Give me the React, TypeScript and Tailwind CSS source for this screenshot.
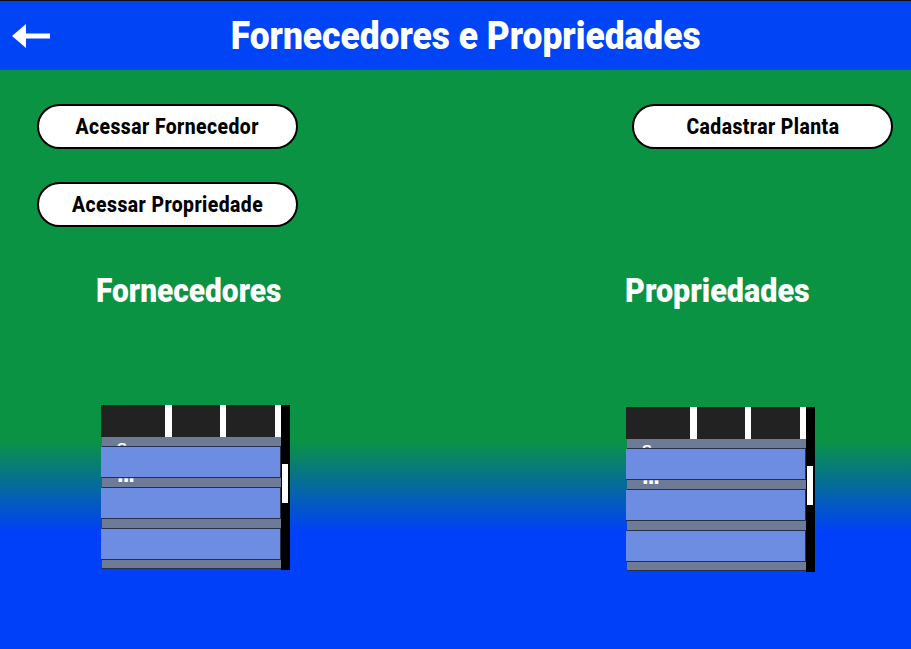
const titleFont = "font-['Roboto','Liberation_Sans',sans-serif] font-black whitespace-nowrap";
const buttonFont = "font-['Roboto','Liberation_Sans',sans-serif] font-extrabold whitespace-nowrap";

function ActionButton({ label }: { label: string }) {
  return (
    <button className={`block h-[45px] w-[261px] rounded-[23px] border-2 border-black bg-white text-center text-[22px] leading-[41px] tracking-[0.5px] text-black ${buttonFont}`}>
      <span className="inline-block scale-x-[0.88]">{label}</span>
    </button>
  );
}

function Row({ text, top }: { text: string; top: string }) {
  return (
    <>
      <div className="ml-px h-[10px] w-[179px] overflow-hidden border-b border-[#27304a] bg-[#6e7b96]">
        <div className={`ml-[15px] font-bold text-white font-['Liberation_Sans',sans-serif] ${top}`}>{text}</div>
      </div>
      <div className="h-[31px] w-[180px] border-r border-b border-[#27304a] bg-[#6d8de3]" />
    </>
  );
}

function DataTable({ className }: { className: string }) {
  return (
    <div className={`flex h-[165px] w-[189px] ${className}`}>
      <div className="flex w-[180px] flex-col">
        <div className="flex h-[32px] w-[180px] shrink-0 bg-[#222222]">
          <div className="w-[64px]" />
          <div className="w-[7px] bg-white" />
          <div className="w-[48px]" />
          <div className="w-[6px] bg-white" />
          <div className="w-[49px]" />
          <div className="w-[6px] bg-white" />
        </div>
        <Row text="S" top="mt-[3px] text-[15px] leading-[16px]" />
        <Row text="..." top="-mt-[14px] text-[24px] leading-[20px] tracking-[-1px]" />
        <div className="ml-px h-[10px] w-[179px] border-b border-[#27304a] bg-[#6e7b96]" />
        <div className="h-[31px] w-[180px] border-r border-b border-[#27304a] bg-[#6d8de3]" />
        <div className="ml-px h-[9px] w-[179px] border-b border-[#27304a] bg-[#6e7b96]" />
      </div>
      <div className="flex-1 bg-black pt-[59px] pl-px pr-[2px]">
        <div className="h-[39px] bg-white" />
      </div>
    </div>
  );
}

export default function App() {
  return (
    <div className="flex h-[649px] w-[911px] flex-col overflow-hidden bg-[linear-gradient(to_bottom,#0b9344_0%,#0b9344_68%,#0040f8_82%,#0040f8_100%)]">
      <header className="flex h-[70px] items-center border-t border-[#101010] bg-[#0044f5] pl-[12px]">
        <svg width="38" height="24" viewBox="0 0 38 24" className="shrink-0">
          <path d="M0 12 L14 0 L14 9.5 L38 9.5 L38 14.5 L14 14.5 L14 24 Z" fill="#fff" />
        </svg>
        <h1 className={`flex-1 pr-[30px] text-center text-[38px] leading-[44px] text-white ${titleFont}`}>
          <span className="inline-block scale-x-[0.93]">Fornecedores e Propriedades</span>
        </h1>
      </header>
      <main className="flex justify-between pl-[37px] pr-[18px] pt-[34px]">
        <section className="w-[261px]">
          <ActionButton label="Acessar Fornecedor" />
          <div className="mt-[33px]"><ActionButton label="Acessar Propriedade" /></div>
          <h2 className={`ml-[59px] mt-[44px] text-[33px] leading-[40px] text-white ${titleFont}`}>
            <span className="inline-block origin-left scale-x-[0.905]">Fornecedores</span>
          </h2>
          <DataTable className="ml-[64px] mt-[94px]" />
        </section>
        <section className="w-[261px]">
          <ActionButton label="Cadastrar Planta" />
          <h2 className={`-ml-[7px] mt-[122px] text-[33px] leading-[40px] text-white ${titleFont}`}>
            <span className="inline-block origin-left scale-x-[0.925]">Propriedades</span>
          </h2>
          <DataTable className="-ml-[6px] mt-[96px]" />
        </section>
      </main>
    </div>
  );
}
